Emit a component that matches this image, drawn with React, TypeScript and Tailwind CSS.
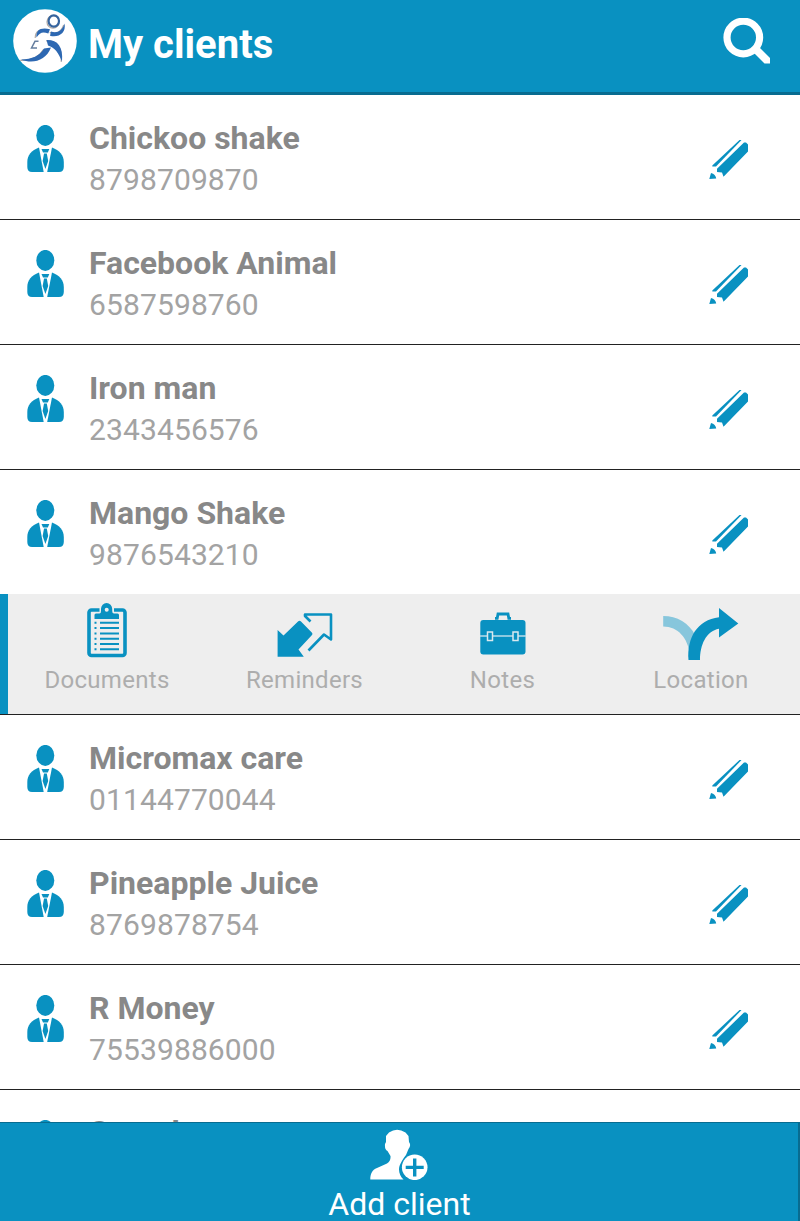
import React from "react";

const BLUE = "#0991c1";

function Runner() {
  return (
    <svg className="h-16 w-16 shrink-0" viewBox="0 0 64 64">
      <circle cx="32" cy="32" r="31.8" fill="#fff" />
      <g transform="translate(-13 -9)">
        <g fill="none" stroke="#b0a8a2" strokeWidth="1.200" transform="translate(-0.8 0.9)">
          <ellipse cx="53.800" cy="21" rx="6" ry="6.300" />
          <path d="M21 59.500C32 60 40 56 44.500 48.500M36 37C36 30 41 27.500 49 29.500M47 40C57 40 63 46 62 61M50.500 31.500C57 34 62 31 64.500 24" />
        </g>
        <ellipse cx="53.800" cy="21" rx="5.200" ry="5.600" fill="none" stroke="#35649f" strokeWidth="2.200" />
        <path d="M36.500 37.500C35.500 30 41 26.800 50 29.200L48.300 33.500C42.500 31.500 40 32.500 36.500 37.500Z" fill="#2d68b2" />
        <path d="M51 31.500C57 33.500 62.500 31 64.500 23.500C66.500 33 58.500 38 50 35.800Z" fill="#2d68b2" />
        <path d="M46.500 40C57 39.500 63.500 46 62 61.500C58.500 53 55 47.500 48 45.500Z" fill="#2d68b2" />
        <path d="M51 47.500C46 60.500 33 64.500 21 59.500C32 59.500 40 55.500 44 48.500Z" fill="#2d68b2" />
        <path d="M38.500 41.300H35L31.500 48H37" fill="none" stroke="#667f9f" strokeWidth="1.500" />
      </g>
    </svg>
  );
}

function SearchIcon() {
  return (
    <svg className="h-12 w-12 shrink-0" viewBox="0 0 48 48" fill="none" stroke="#fff">
      <circle cx="20.300" cy="19.500" r="16.300" strokeWidth="7.200" />
      <path d="M31 30L35.500 28.500L47 40V45.500H41.500L29.500 33.500Z" fill="#fff" stroke="none" />
    </svg>
  );
}

function PersonIcon() {
  return (
    <svg className="h-12 w-[37px] shrink-0" viewBox="0 0 37 48" fill={BLUE}>
      <ellipse cx="18.300" cy="10.400" rx="9" ry="10.500" />
      <path d="M12 22.500C4.500 25.500.3 30 .3 37V42Q.3 47 5 47H16.700Z" />
      <path d="M25 22.500C32.500 25.500 36.800 30 36.800 37V42Q36.800 47 32 47H20.200Z" />
      <path d="M14.500 24H22.300L20.800 27.500H16Z" />
      <path d="M17 28.500H19.800L21.200 36L18.400 44L15.600 36Z" />
    </svg>
  );
}

function PencilIcon() {
  return (
    <svg className="h-10 w-10" viewBox="0 0 40 40" fill={BLUE}>
      <path d="M30.500 0H32.500L7 26.500H3.300V25.500Z" />
      <path d="M35 2.500H37L39 4.500V11.500L14.500 36.800L13 32.500L8 32V28.700Z" />
      <path d="M2 33C5 33.500 7 36 7.200 38.500L.3 39Z" />
    </svg>
  );
}

function DocumentsIcon() {
  return (
    <svg className="h-[55px] w-10" viewBox="0 0 40 55">
      <rect x="2" y="7" width="36" height="45.500" rx="2.500" fill="none" stroke={BLUE} strokeWidth="3.600" />
      <path d="M12.500 3H27V11H12.500Z" fill="#eee" />
      <path d="M7.500 16V12Q7.500 10.500 9 10.500H12.500Q14 10.500 14 8V6A5.600 6 0 0 1 25.200 6V8Q25.200 10.500 27 10.500H30.500Q32 10.500 32 12V16Z" fill={BLUE} />
      <circle cx="19.700" cy="6.700" r="2" fill="#eee" />
      <path d="M7.500 19.800H9.500M13 19.800H32M7.500 25.100H9.500M13 25.100H32M7.500 30.400H9.500M13 30.400H32M7.500 35.700H9.500M13 35.700H32M7.500 41H9.500M13 41H32M7.500 46.300H9.500M13 46.300H32" stroke={BLUE} strokeWidth="2" />
    </svg>
  );
}

function RemindersIcon() {
  return (
    <svg className="h-11 w-14" viewBox="0 0 56 44">
      <path d="M.6 17L6.500 22.500L21 8.500Q22.500 7 24 8.500L35 19.800Q36 21 35 22L21.500 36.500L26.800 43.800H.6Z" fill={BLUE} />
      <path d="M33.500 8.500L28 3V1.500H54V26.500L47 21.500L31.500 37.500" fill="none" stroke={BLUE} strokeWidth="2.600" strokeLinejoin="round" />
    </svg>
  );
}

function NotesIcon() {
  return (
    <svg className="h-[43px] w-[46px]" viewBox="0 0 46 43">
      <path d="M15 6.300H17.200L18 2H28L28.800 6.300H31" fill="none" stroke={BLUE} strokeWidth="2.800" />
      <rect x=".3" y="8" width="45.200" height="34.500" rx="3" fill={BLUE} />
      <path d="M0 24H46" stroke="#b8dce9" strokeWidth="1.500" />
      <g fill={BLUE} stroke="#d9e9ef" strokeWidth="1.500">
        <rect x="7.500" y="20" width="5" height="8.500" />
        <rect x="33" y="20" width="5" height="8.500" />
      </g>
    </svg>
  );
}

function LocationIcon() {
  return (
    <svg className="h-[53px] w-[76px]" viewBox="0 0 76 53">
      <path d="M.2 8C14 8 26 15 32.500 27.500L27 47C25 30 15 18.500.2 18.500Z" fill="#87c6dc" />
      <path d="M25.500 52C24 30 34 12 56 9.300V0L75.300 15.500L56 29.500V20.700C43 23 37 37 37 52Z" fill={BLUE} />
    </svg>
  );
}

function AddClientIcon() {
  return (
    <svg className="h-[51px] w-[58px] shrink-0" viewBox="0 0 58 51">
      <path d="M.3 50.500C.3 45 2 41 7 39L17 34.500Q21 32 20.500 27L17.500 22Q14.500 21 15 15L16 13V7L19 3.500Q27 -2 35.500 3.500L38.500 7L39 13Q41.500 16 38.500 20L36 26C33 30 31 33 29.500 37C28 42 30 47 33.500 50.500Z" fill="#fff" />
      <circle cx="44.700" cy="38.300" r="12.800" fill="#fff" />
      <path d="M44.700 29.500V47.500M35.700 38.400H53.700" stroke={BLUE} strokeWidth="3.400" />
    </svg>
  );
}

type Client = { name: string; phone?: string; open?: boolean };

const clients: Client[] = [
  { name: "Chickoo shake", phone: "8798709870" },
  { name: "Facebook Animal", phone: "6587598760" },
  { name: "Iron man", phone: "2343456576" },
  { name: "Mango Shake", phone: "9876543210", open: true },
  { name: "Micromax care", phone: "01144770044" },
  { name: "Pineapple Juice", phone: "8769878754" },
  { name: "R Money", phone: "75539886000" },
  { name: "Suresh" },
];

function ClientRow({ client }: { client: Client }) {
  return (
    <li className={client.open ? "h-[124px] shrink-0" : "h-[125px] shrink-0 border-b border-[#222]"}>
      <div className="flex items-start pl-[27px] pr-[51px] pt-[30px]">
        <PersonIcon />
        <div className={client.phone ? "-mt-[7px] ml-[25px] flex-1 whitespace-nowrap" : "-mt-2 ml-[25px] flex-1 whitespace-nowrap"}>
          <h2 className="text-[32px] font-bold leading-10 text-[#888]">{client.name}</h2>
          {client.phone && (
            <p className="text-[30px] leading-[44px] tracking-[0.12px] text-[#a3a3a3]">{client.phone}</p>
          )}
        </div>
        <button className="mt-[15px]" aria-label="Edit">
          <PencilIcon />
        </button>
      </div>
    </li>
  );
}

const label = "whitespace-nowrap text-2xl leading-7 tracking-[0.3px] text-[#adadad]";

function Actions() {
  return (
    <li className="flex h-[121px] shrink-0 border-b border-[#222] bg-[#eee]">
      <div className="w-2 bg-[#0991c1]" />
      <div className="grid flex-1 grid-cols-4">
        <div className="flex flex-col items-center">
          <div className="flex h-[72px] items-start pt-[9px]"><DocumentsIcon /></div>
          <span className={label}>Documents</span>
        </div>
        <div className="flex flex-col items-center pr-px">
          <div className="flex h-[72px] items-start pl-px pt-[19px]"><RemindersIcon /></div>
          <span className={label}>Reminders</span>
        </div>
        <div className="flex flex-col items-center pr-px">
          <div className="flex h-[72px] items-start pt-[18px]"><NotesIcon /></div>
          <span className={label}>Notes</span>
        </div>
        <div className="flex flex-col items-center">
          <div className="flex h-[72px] items-start pt-[14px]"><LocationIcon /></div>
          <span className={label}>Location</span>
        </div>
      </div>
    </li>
  );
}

export default function App() {
  return (
    <div className="flex h-[1221px] w-[800px] flex-col overflow-hidden bg-white font-['Roboto',sans-serif]">
      <header className="flex h-[95px] shrink-0 items-start border-b-[3px] border-[#086c90] bg-[#0991c1] pl-[13px] pr-[29px] pt-[9px]">
        <Runner />
        <h1 className="ml-[11px] mt-[12px] flex-1 text-[40px] font-bold leading-12 text-white">My clients</h1>
        <button className="mt-[9px]" aria-label="Search"><SearchIcon /></button>
      </header>
      <ul className="flex min-h-0 flex-1 flex-col overflow-hidden">
        {clients.map((c) => (
          <React.Fragment key={c.name}>
            <ClientRow client={c} />
            {c.open && <Actions />}
          </React.Fragment>
        ))}
      </ul>
      <footer className="flex h-[99px] shrink-0 flex-col items-center border-r-2 border-t border-[#086c90] bg-[#0991c1] pt-[6px] text-white">
        <AddClientIcon />
        <span className="mt-[7px] pl-px text-[32px] leading-[34px]">Add client</span>
      </footer>
    </div>
  );
}
